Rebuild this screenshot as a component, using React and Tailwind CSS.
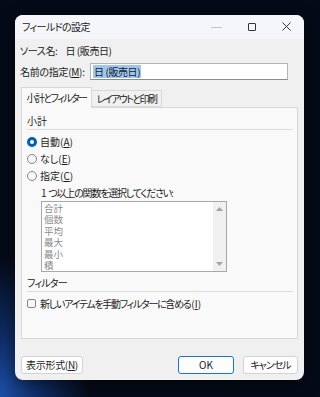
export default function App() {
	const radios = [
		{ label: "自動", key: "A", checked: true },
		{ label: "なし", key: "E", checked: false },
		{ label: "指定", key: "C", checked: false },
	];
	const funcs = ["合計", "個数", "平均", "最大", "最小", "積"];

	return (
		<div className='w-[320px] h-[397px] overflow-hidden pt-[15px] pl-[15px] bg-[#040a17] bg-[radial-gradient(ellipse_90px_140px_at_0px_397px,#1d4fa8_0%,#0f2b63_45%,#040a17_100%)] [font-family:"Noto_Sans_CJK_JP",sans-serif] [font-feature-settings:"palt"_1] text-[10px] text-[#1b1b1b]'>
			<div className="w-[289px] h-[365px] rounded-[8px] bg-[#f0f0f0] overflow-hidden flex flex-col shadow-[0_4px_16px_rgba(0,0,0,0.5)]">
				{/* title bar */}
				<div className="h-[24px] flex items-center bg-[#f4f6f9]">
					<span className="ml-[7px] leading-[24px] tracking-[-0.6px]">フィールドの設定</span>
					<div className="ml-auto flex h-full">
						<div className="w-[35px] flex items-center justify-center">
							<div className="w-[11px] h-px bg-[#c4c4c4]" />
						</div>
						<div className="w-[35px] flex items-center justify-center">
							<div className="w-[8px] h-[8px] border border-[#333] rounded-[1px] -mt-px" />
						</div>
						<div className="w-[35px] flex items-center justify-center">
							<svg width="9" height="9" viewBox="0 0 9 9" className="-mt-px">
								<path d="M0.5 0.5L8.5 8.5M8.5 0.5L0.5 8.5" stroke="#333" strokeWidth="1" />
							</svg>
						</div>
					</div>
				</div>

				{/* source name */}
				<div className="mt-[4px] ml-[5px] h-[16px] leading-[16px] flex tracking-[-0.4px]">
					<span>ソース名:</span>
					<span className="ml-[8px]">日 (販売日)</span>
				</div>

				{/* name */}
				<div className="mt-[4px] ml-[5px] h-[17px] flex items-center">
					<span className="tracking-[-0.3px]">
						名前の指定(<span className="underline">M</span>):
					</span>
					<div className="ml-auto mr-[16px] w-[198px] h-[17px] bg-white border border-[#b4b4b4] border-b-[#8c8c8c] flex items-center pl-[2px]">
						<span className="bg-[#9dc7ef] leading-[13px] px-px tracking-[-0.4px]">日 (販売日)</span>
					</div>
				</div>

				{/* tabs */}
				<div className="mt-[7px] ml-[6px] h-[20px] flex items-end">
					<div className="w-[71px] h-[21px] -mb-px relative z-10 bg-[#f9f9f9] border border-b-0 border-[#d9d9d9] flex items-center justify-center leading-[18px] whitespace-nowrap tracking-[-1.6px]">
						小計とフィルター
					</div>
					<div className="w-[70px] h-[17px] bg-[#f0f0f0] border border-l-0 border-[#d9d9d9] flex items-center justify-center leading-[16px] whitespace-nowrap tracking-[-1.6px]">
						レイアウトと印刷
					</div>
				</div>

				{/* panel */}
				<div className="ml-[6px] w-[277px] h-[232px] bg-[#f9f9f9] border border-[#d9d9d9] pl-[5px] pr-[4px] pt-[5px] flex flex-col">
					<div className="h-[17px] leading-[16px] border-b border-[#dedede]">小計</div>

					<div className="mt-[3px] flex flex-col">
						{radios.map((r) => (
							<div key={r.key} className="h-[17px] flex items-center">
								{r.checked ? (
									<div className="w-[10px] h-[10px] rounded-full bg-[#005fb8] flex items-center justify-center">
										<div className="w-[4px] h-[4px] rounded-full bg-white" />
									</div>
								) : (
									<div className="w-[10px] h-[10px] rounded-full border border-[#858585] bg-[#f7f7f7]" />
								)}
								<span className="ml-[3px]">
									{r.label}(<span className="underline">{r.key}</span>)
								</span>
							</div>
						))}
					</div>

					<div className="mt-px ml-[14px] h-[16px] leading-[16px] whitespace-nowrap tracking-[-1.2px]">
						1<span className="ml-[3px]">つ以上の関数を選択してください:</span>
					</div>

					<div className="ml-[14px] w-[186px] h-[71px] bg-white border border-[#a8a8a8] flex">
						<div className="flex-1 pl-[2px] pt-px flex flex-col text-[#8a8a8a] text-[9.5px] leading-[11.4px]">
							{funcs.map((f) => (
								<span key={f} className="h-[11.4px]">{f}</span>
							))}
						</div>
						<div className="w-[13px] bg-[#f0f0f0] flex flex-col items-center justify-between py-[5px]">
							<svg width="7" height="4" viewBox="0 0 7 4">
								<path d="M3.5 0L7 4H0Z" fill="#a3a3a3" />
							</svg>
							<svg width="7" height="4" viewBox="0 0 7 4">
								<path d="M0 0H7L3.5 4Z" fill="#a3a3a3" />
							</svg>
						</div>
					</div>

					<div className="mt-[3px] h-[17px] leading-[16px] border-b border-[#dedede] tracking-[-0.8px]">フィルター</div>

					<div className="mt-[3px] h-[16px] flex items-center">
						<div className="w-[9px] h-[9px] rounded-[2px] border border-[#858585] bg-[#f7f7f7]" />
						<span className="ml-[4px] whitespace-nowrap tracking-[-1.3px]">
							新しいアイテムを手動フィルターに含める
						</span>
						<span className="ml-[1px]">
							(<span className="underline">I</span>)
						</span>
					</div>
				</div>

				{/* buttons */}
				<div className="mt-[17px] mx-[6px] h-[18px] flex">
					<button className="w-[62px] h-[18px] bg-[#fdfdfd] border border-[#d3d3d3] rounded-[3px] flex items-center justify-center leading-[16px] whitespace-nowrap tracking-[-0.3px]">
						表示形式(<span className="underline">N</span>)
					</button>
					<button className="ml-auto w-[56px] h-[18px] bg-[#fdfdfd] border border-[#1b74c8] rounded-[3px] flex items-center justify-center leading-[16px]">
						OK
					</button>
					<button className="ml-[9px] w-[55px] h-[18px] bg-[#fdfdfd] border border-[#d3d3d3] rounded-[3px] flex items-center justify-center leading-[16px] whitespace-nowrap tracking-[-1px]">
						キャンセル
					</button>
				</div>
			</div>
		</div>
	);
}
